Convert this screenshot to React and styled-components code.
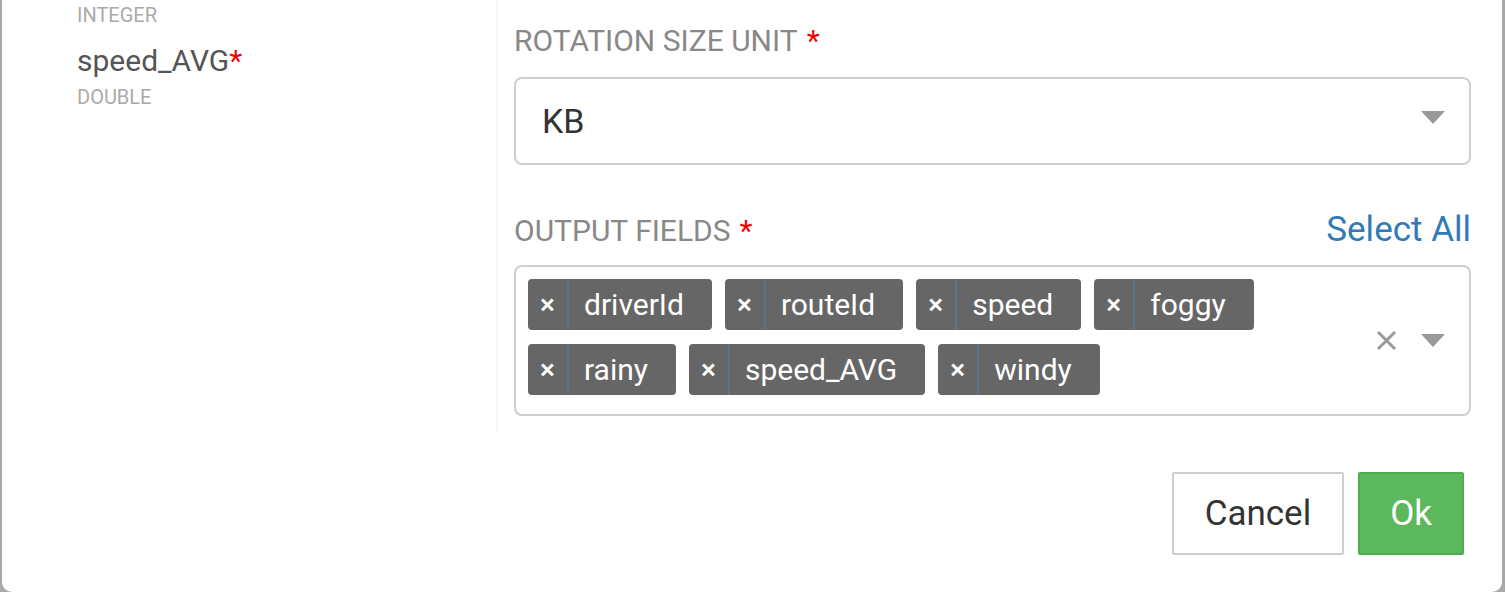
import React from 'react'
import styled, { createGlobalStyle } from 'styled-components'

const GlobalStyle = createGlobalStyle`
  html, body {
    margin: 0;
    padding: 0;
    background: #a8a8a8;
    font-family: Roboto, 'Liberation Sans', Arial, sans-serif;
    overflow: hidden;
  }
`

const Modal = styled.div`
  margin: 0 3px 0 2px;
  height: 592px;
  background: #fff;
  border-radius: 0 0 10px 10px;
  display: flex;
  flex-direction: column;
  overflow: hidden;
`

const Body = styled.div`
  display: flex;
  height: 433px;
`

const Sidebar = styled.div`
  width: 496px;
  padding: 4px 0 0 75px;
  box-sizing: border-box;
  border-right: 2px solid #f6f6f6;
`

const Field = styled.div`
  margin-bottom: 18px;
`

const FieldName = styled.div`
  font-size: 30px;
  color: #555;
  line-height: 34px;
  margin-bottom: 8px;
`

const FieldType = styled.div`
  font-size: 20px;
  color: #aaa;
  line-height: 22px;
  text-transform: uppercase;
`

const Required = styled.span`
  color: #e00;
  margin-left: ${(p) => (p.spaced ? '9px' : '0')};
`

const Form = styled.div`
  flex: 1;
  padding: 23px 31px 0 16px;
`

const LabelRow = styled.div`
  display: flex;
  justify-content: space-between;
  align-items: baseline;
  height: 36px;
  margin-bottom: ${(p) => p.gap}px;
`

const Label = styled.div`
  font-size: 30px;
  color: #888;
  line-height: 36px;
`

const LinkButton = styled.a`
  font-size: 35px;
  color: #337ab7;
  line-height: 36px;
  cursor: pointer;
`

const SelectBox = styled.div`
  border: 2px solid #cfcfcf;
  border-radius: 8px;
  display: flex;
  align-items: center;
  box-sizing: border-box;
  min-height: ${(p) => p.height || 0}px;
  padding: 12px 24px 19px 12px;
  margin-bottom: ${(p) => p.gap || 0}px;
`

const Value = styled.div`
  flex: 1;
  font-size: 34px;
  color: #333;
  padding-left: 14px;
  margin-top: 7px;
`

const Chips = styled.div`
  flex: 1;
  display: flex;
  flex-wrap: wrap;
  gap: 14px 13px;
`

const Chip = styled.div`
  display: flex;
  align-items: stretch;
  height: 51px;
  background: #666;
  border-radius: 4px;
  color: #fff;
`

const ChipRemove = styled.span`
  width: 39px;
  display: flex;
  align-items: center;
  justify-content: center;
  font-size: 28px;
  font-weight: 500;
  border-right: 2px solid #587590;
`

const ChipLabel = styled.span`
  display: flex;
  align-items: center;
  padding: 0 28px 0 15px;
  font-size: 30px;
`

const Controls = styled.div`
  display: flex;
  align-items: center;
  gap: 24px;
  margin-top: 7px;
`

const Footer = styled.div`
  display: flex;
  justify-content: flex-end;
  gap: 14px;
  padding: 39px 38px 0 0;
`

const Button = styled.button`
  height: 83px;
  padding: 0 ${(p) => (p.primary ? 30 : 31)}px;
  font-family: inherit;
  font-size: 35px;
  border: 2px solid ${(p) => (p.primary ? '#4cae4c' : '#cfcfcf')};
  background: ${(p) => (p.primary ? '#5cb85c' : '#fff')};
  color: ${(p) => (p.primary ? '#fff' : '#333')};
  border-radius: 2px;
  cursor: pointer;
`

const Caret = () => (
  <svg width="24" height="13" viewBox="0 0 24 13">
    <path d="M0 0h24L12 13z" fill="#999" />
  </svg>
)

const Clear = () => (
  <svg width="21" height="21" viewBox="0 0 21 21">
    <path d="M2 2l17 17M19 2L2 19" stroke="#999" strokeWidth="3" />
  </svg>
)

// list is scrolled, so the first entry only shows its type line
const fields = [
  { type: 'integer' },
  { name: 'speed_AVG', type: 'double' },
]

const outputs = ['driverId', 'routeId', 'speed', 'foggy', 'rainy', 'speed_AVG', 'windy']

export default function App() {
  return (
    <>
      <GlobalStyle />
      <Modal>
        <Body>
          <Sidebar>
            {fields.map((f, i) => (
              <Field key={i}>
                {f.name && (
                  <FieldName>
                    {f.name}
                    <Required>*</Required>
                  </FieldName>
                )}
                <FieldType>{f.type}</FieldType>
              </Field>
            ))}
          </Sidebar>
          <Form>
            <LabelRow gap={18}>
              <Label>
                ROTATION SIZE UNIT<Required spaced>*</Required>
              </Label>
            </LabelRow>
            <SelectBox height={88} gap={47}>
              <Value>KB</Value>
              <Caret />
            </SelectBox>
            <LabelRow gap={17}>
              <Label>
                OUTPUT FIELDS<Required spaced>*</Required>
              </Label>
              <LinkButton>Select All</LinkButton>
            </LabelRow>
            <SelectBox>
              <Chips>
                {outputs.map((o) => (
                  <Chip key={o}>
                    <ChipRemove>×</ChipRemove>
                    <ChipLabel>{o}</ChipLabel>
                  </Chip>
                ))}
              </Chips>
              <Controls>
                <Clear />
                <Caret />
              </Controls>
            </SelectBox>
          </Form>
        </Body>
        <Footer>
          <Button>Cancel</Button>
          <Button primary>Ok</Button>
        </Footer>
      </Modal>
    </>
  )
}
